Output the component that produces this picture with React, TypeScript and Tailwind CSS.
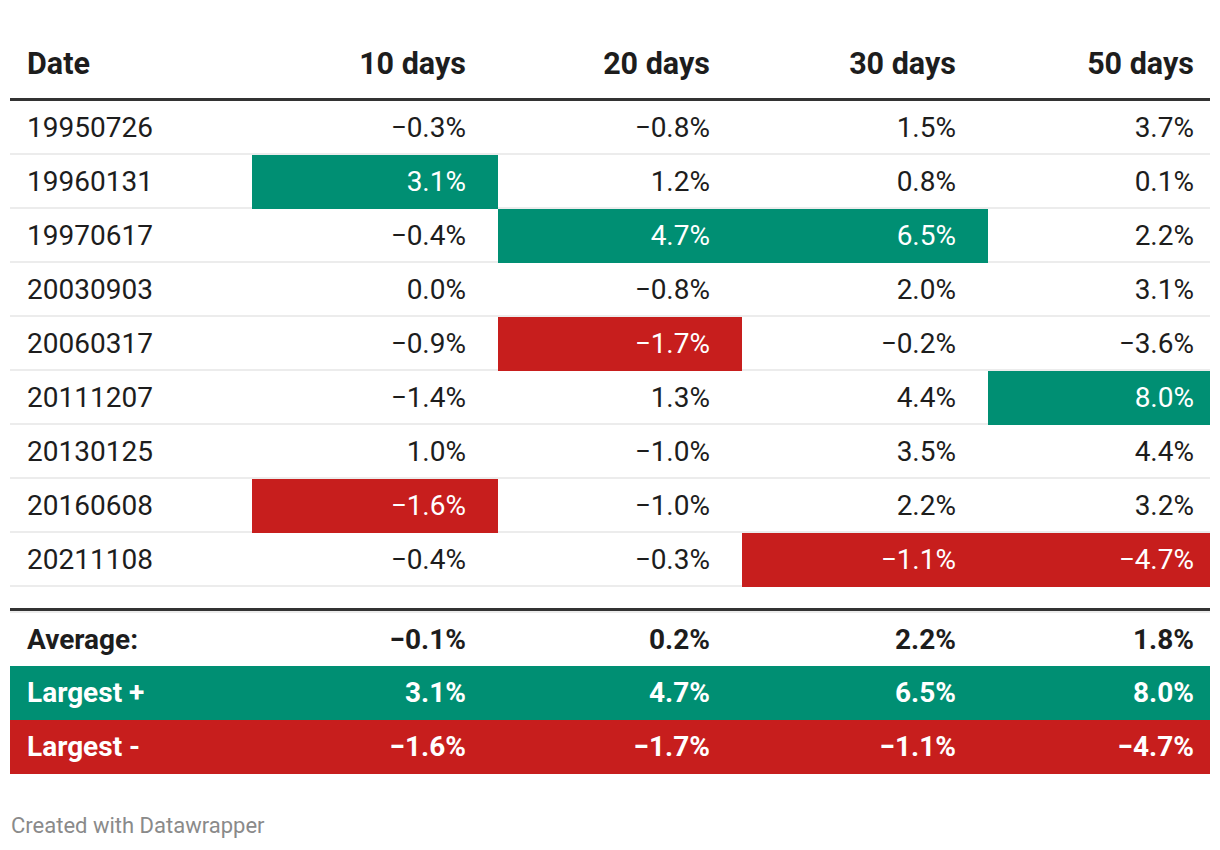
import React from 'react';

type Tone = 'pos' | 'neg' | null;

const rows: { date: string; vals: string[]; tones: Tone[] }[] = [
  { date: '19950726', vals: ['−0.3%', '−0.8%', '1.5%', '3.7%'], tones: [null, null, null, null] },
  { date: '19960131', vals: ['3.1%', '1.2%', '0.8%', '0.1%'], tones: ['pos', null, null, null] },
  { date: '19970617', vals: ['−0.4%', '4.7%', '6.5%', '2.2%'], tones: [null, 'pos', 'pos', null] },
  { date: '20030903', vals: ['0.0%', '−0.8%', '2.0%', '3.1%'], tones: [null, null, null, null] },
  { date: '20060317', vals: ['−0.9%', '−1.7%', '−0.2%', '−3.6%'], tones: [null, 'neg', null, null] },
  { date: '20111207', vals: ['−1.4%', '1.3%', '4.4%', '8.0%'], tones: [null, null, null, 'pos'] },
  { date: '20130125', vals: ['1.0%', '−1.0%', '3.5%', '4.4%'], tones: [null, null, null, null] },
  { date: '20160608', vals: ['−1.6%', '−1.0%', '2.2%', '3.2%'], tones: ['neg', null, null, null] },
  { date: '20211108', vals: ['−0.4%', '−0.3%', '−1.1%', '−4.7%'], tones: [null, null, 'neg', 'neg'] },
];

const headers = ['10 days', '20 days', '30 days', '50 days'];

// right padding per value column (last column sits closer to the edge)
const padR = ['pr-[32px]', 'pr-[32px]', 'pr-[32px]', 'pr-[16px]'];

const grid = 'grid grid-cols-[242px_246px_244px_246px_222px]';

function toneClass(t: Tone) {
  if (t === 'pos') return 'bg-[#008f73] text-white border-transparent';
  if (t === 'neg') return 'bg-[#c71e1d] text-white border-transparent';
  return 'border-[#ececec]';
}

export default function App() {
  return (
    <div className="w-[1220px] h-[850px] bg-white font-['Roboto',sans-serif] text-[#1d1d1d]">
      <div className="ml-[10px] w-[1200px]">
        {/* Header */}
        <div className={`${grid} h-[101px] pt-[30px] border-b-[3px] border-[#333333] text-[30.5px] font-bold leading-[1.2]`}>
          <div className="flex items-center pl-[17px]">Date</div>
          {headers.map((h, i) => (
            <div key={h} className={`flex items-center justify-end ${padR[i]}`}>
              {h}
            </div>
          ))}
        </div>

        {/* Body */}
        {rows.map((r) => (
          <div key={r.date} className={`${grid} h-[54px] text-[28px] leading-[1.2]`}>
            <div className="flex items-center pl-[17px] pt-[2px] border-b-2 border-[#ececec]">{r.date}</div>
            {r.vals.map((v, i) => (
              <div
                key={i}
                className={`flex items-center justify-end pt-[2px] border-b-2 ${padR[i]} ${toneClass(r.tones[i])}`}
              >
                {v}
              </div>
            ))}
          </div>
        ))}

        {/* Summary */}
        <div className="h-[21px]" />
        <div className="h-[3px] bg-[#333333]" />
        <div className="h-[2px] bg-[#ececec]" />
        <div className={`${grid} h-[53px] text-[28px] font-bold leading-[1.2]`}>
          <div className="flex items-center pl-[17px]">Average:</div>
          {['−0.1%', '0.2%', '2.2%', '1.8%'].map((v, i) => (
            <div key={i} className={`flex items-center justify-end ${padR[i]}`}>
              {v}
            </div>
          ))}
        </div>
        <div className={`${grid} h-[54px] bg-[#008f73] text-white text-[28px] font-bold leading-[1.2]`}>
          <div className="flex items-center pl-[17px]">Largest +</div>
          {['3.1%', '4.7%', '6.5%', '8.0%'].map((v, i) => (
            <div key={i} className={`flex items-center justify-end ${padR[i]}`}>
              {v}
            </div>
          ))}
        </div>
        <div className={`${grid} h-[54px] bg-[#c71e1d] text-white text-[28px] font-bold leading-[1.2]`}>
          <div className="flex items-center pl-[17px]">Largest -</div>
          {['−1.6%', '−1.7%', '−1.1%', '−4.7%'].map((v, i) => (
            <div key={i} className={`flex items-center justify-end ${padR[i]}`}>
              {v}
            </div>
          ))}
        </div>

        {/* Footer */}
        <div className="mt-[39px] pl-[1px] text-[22px] leading-[1.2] text-[#8a8a8a]">Created with Datawrapper</div>
      </div>
    </div>
  );
}
